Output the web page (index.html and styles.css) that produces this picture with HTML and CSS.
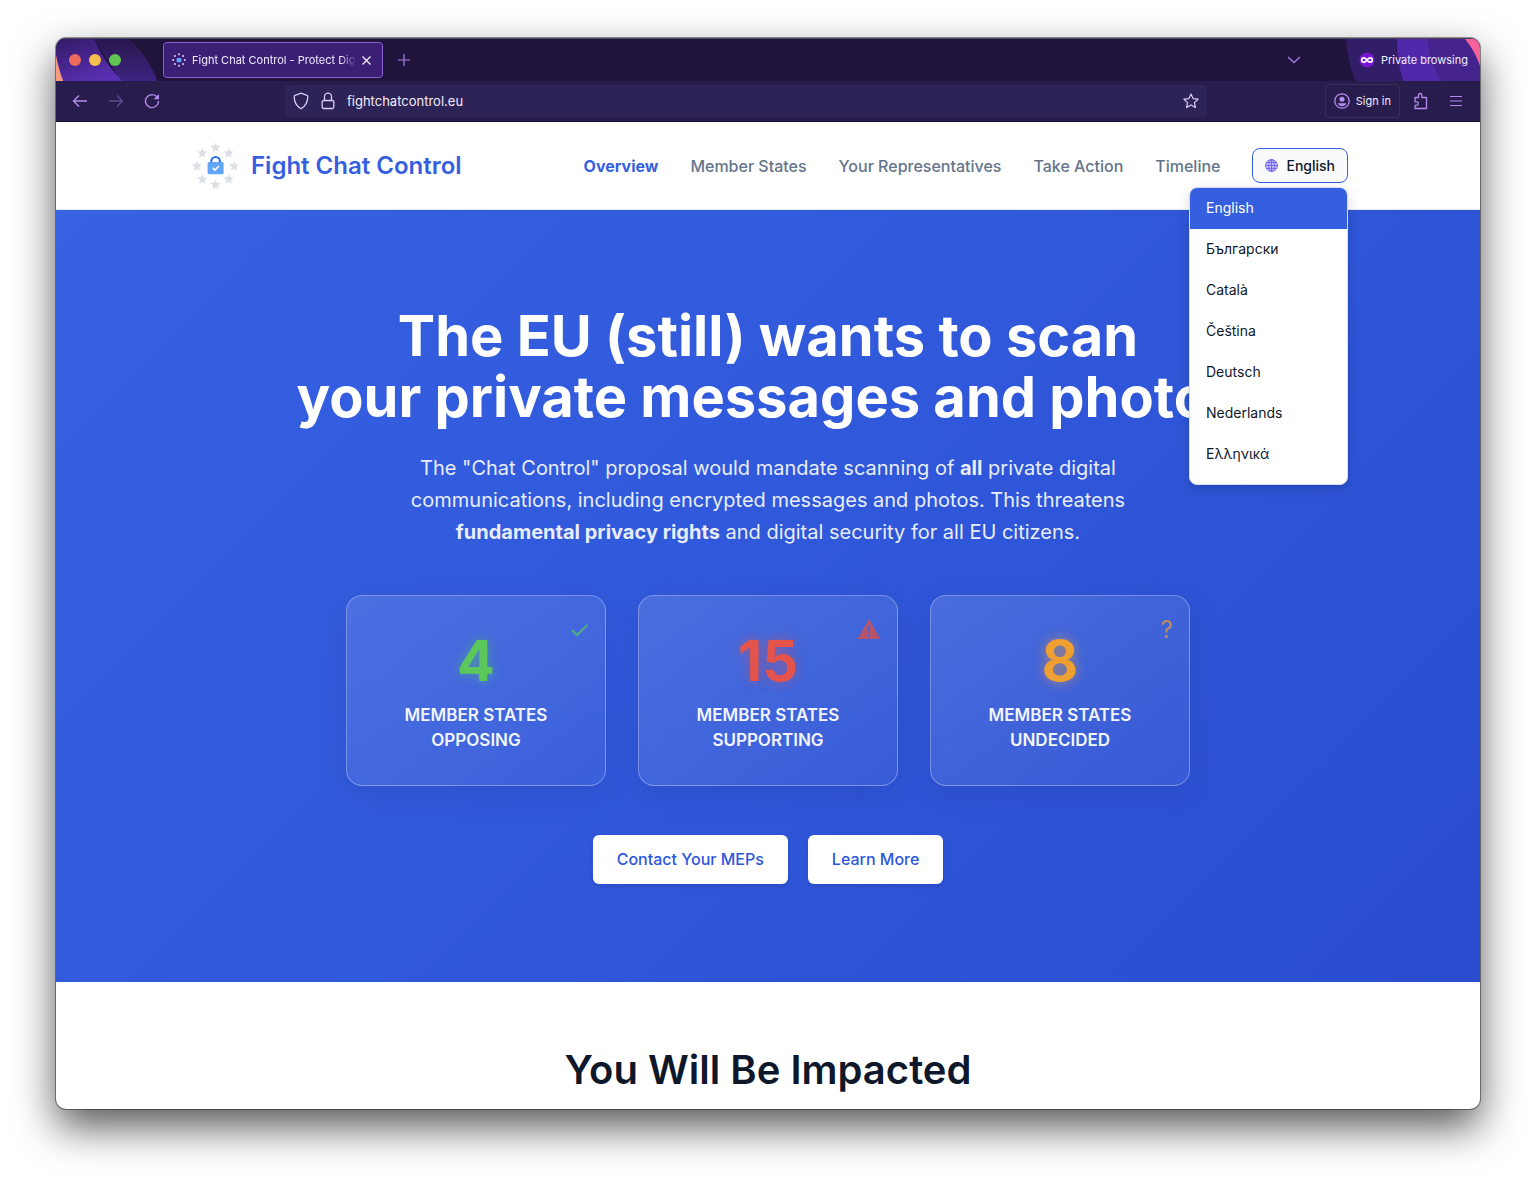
FILE: index.html
```html
<!DOCTYPE html>
<html lang="en">
<head>
    <meta charset="UTF-8">
    <meta name="viewport" content="width=device-width, initial-scale=1">
    <title>Fight Chat Control - Protect Digital Privacy in the EU</title>
    <link rel="stylesheet" href="styles.css">
</head>
<body>

<div class="window">
    <div class="tabbar">
        <svg class="theme theme-left" width="104" height="42" viewBox="0 0 104 42" aria-hidden="true">
            <defs>
                <linearGradient id="lg1" x1="0" y1="0" x2="0.5" y2="1">
                    <stop offset="0" stop-color="#321a66"/>
                    <stop offset="1" stop-color="#5a2fb4"/>
                </linearGradient>
                <linearGradient id="lg2" x1="0" y1="0" x2="0" y2="1">
                    <stop offset="0" stop-color="#28174d"/>
                    <stop offset="1" stop-color="#3f2484"/>
                </linearGradient>
            </defs>
            <path d="M38 0H72Q92 16 102 44H66Z" fill="url(#lg2)"/>
            <path d="M0 0H38Q48 24 68 44H0Z" fill="url(#lg1)"/>
            <path d="M0 16Q3 32 8 44H0Z" fill="#f79a80"/>
        </svg>
        <svg class="theme theme-right" width="134" height="42" viewBox="0 0 134 42" aria-hidden="true">
            <path d="M0 0H134V44H10Q2 24 0 0Z" fill="#321d68"/>
            <path d="M51 0H82Q84 24 97 44H58Q51 24 51 0Z" fill="#5029aa"/>
            <path d="M82 0H134V44H97Q84 24 82 0Z" fill="#44238c"/>
            <path d="M119 0H134V27Q129 12 119 0Z" fill="#f6619a"/>
        </svg>
        <div class="lights">
            <span class="light red"></span>
            <span class="light yellow"></span>
            <span class="light green"></span>
        </div>
        <div class="tab">
            <svg width="14" height="14" viewBox="0 0 14 14" aria-hidden="true">
                <g fill="#d9d2f5">
                    <circle cx="7" cy="1.2" r="1"/><circle cx="11.1" cy="2.9" r="1"/>
                    <circle cx="12.8" cy="7" r="1"/><circle cx="11.1" cy="11.1" r="1"/>
                    <circle cx="7" cy="12.8" r="1"/><circle cx="2.9" cy="11.1" r="1"/>
                    <circle cx="1.2" cy="7" r="1"/><circle cx="2.9" cy="2.9" r="1"/>
                </g>
                <rect x="4.6" y="5" width="4.8" height="4.2" rx="1" fill="#5fa5fa"/>
            </svg>
            <span class="tab-title">Fight Chat Control - Protect Digital</span>
            <button class="icon-btn tab-close" aria-label="Close tab">
                <svg width="9" height="9" viewBox="0 0 9 9"><path d="M0.5 0.5l8 8M8.500 0.5l-8 8" stroke="#f1ecff" stroke-width="1.3"/></svg>
            </button>
        </div>
        <button class="icon-btn new-tab" aria-label="New tab">
            <svg width="12" height="12" viewBox="0 0 12 12"><path d="M6 0v12M0 6h12" stroke="#a77fe6" stroke-width="1.2"/></svg>
        </button>
        <button class="icon-btn all-tabs" aria-label="List all tabs">
            <svg width="14" height="8" viewBox="0 0 14 8"><path d="M1 1l6 5.600L13 1" fill="none" stroke="#a77fe6" stroke-width="1.3"/></svg>
        </button>
        <div class="private">
            <svg width="16" height="16" viewBox="0 0 16 16" aria-hidden="true">
                <circle cx="8" cy="8" r="7.600" fill="#7a16d2"/>
                <path d="M8 8C6.800 6.300 6 5.800 4.900 5.800a2.200 2.200 0 0 0 0 4.400C6 10.200 6.800 9.700 8 8s2-2.200 3.100-2.200a2.200 2.200 0 0 1 0 4.400C10 10.200 9.200 9.700 8 8z" fill="none" stroke="#fff" stroke-width="1.700"/>
            </svg>
            <span>Private browsing</span>
        </div>
    </div>

    <div class="toolbar">
        <div class="history">
            <button class="icon-btn" aria-label="Back">
                <svg width="16" height="14" viewBox="0 0 16 14"><path d="M15 7H1.500M7 1.500L1.500 7 7 12.500" fill="none" stroke="#b48cf0" stroke-width="1.400"/></svg>
            </button>
            <button class="icon-btn" aria-label="Forward" disabled>
                <svg width="16" height="14" viewBox="0 0 16 14"><path d="M1 7h13.500M9 1.500L14.500 7 9 12.500" fill="none" stroke="#604a92" stroke-width="1.400"/></svg>
            </button>
            <button class="icon-btn" aria-label="Reload">
                <svg width="16" height="16" viewBox="0 0 16 16"><path d="M13.200 4.200A6.500 6.500 0 1 0 14.500 8" fill="none" stroke="#b48cf0" stroke-width="1.400"/><path d="M15 1v5.300H9.700z" fill="#b48cf0"/></svg>
            </button>
        </div>
        <div class="urlbar">
            <svg width="16" height="18" viewBox="0 0 16 18" aria-hidden="true"><path d="M8 1.200l6 2.100c.6.200.8.600.8 1.200 0 5-1.300 9.200-6.800 12.200C2.500 13.700 1.200 9.500 1.200 4.500c0-.6.200-1 .8-1.200z" fill="none" stroke="#d8cdf4" stroke-width="1.300"/></svg>
            <svg width="14" height="18" viewBox="0 0 14 18" aria-hidden="true"><rect x="1.200" y="8.500" width="11.600" height="8" rx="1.500" fill="none" stroke="#d8cdf4" stroke-width="1.300"/><path d="M3.500 8.500V4.600a3.500 3.500 0 0 1 7 0v3.900" fill="none" stroke="#d8cdf4" stroke-width="1.300"/></svg>
            <input class="url" type="text" value="fightchatcontrol.eu" aria-label="Address">
            <button class="icon-btn" aria-label="Bookmark this page">
                <svg width="16" height="16" viewBox="0 0 16 16"><path d="M8 1l2.100 4.600 5 .6-3.700 3.400 1 5L8 12.100 3.600 14.600l1-5L.9 6.200l5-.6z" fill="none" stroke="#d8cdf4" stroke-width="1.200" stroke-linejoin="round"/></svg>
            </button>
        </div>
        <div class="tools">
            <button class="sign-in">
                <svg width="16" height="16" viewBox="0 0 16 16" aria-hidden="true"><circle cx="8" cy="8" r="7.200" fill="none" stroke="#b48cf0" stroke-width="1.300"/><circle cx="8" cy="6.300" r="2.500" fill="#b48cf0"/><path d="M3.500 10.200h9C11.500 12.300 10 13.200 8 13.200s-3.500-.9-4.500-3z" fill="#b48cf0"/></svg>
                Sign in
            </button>
            <button class="icon-btn" aria-label="Extensions">
                <svg width="16" height="18" viewBox="0 0 16 18"><path d="M2 5.500h3.500V3.200a1.700 1.700 0 0 1 3.400 0v2.300H13.500V16.500H2v-3.200h1.600a1.700 1.700 0 0 0 0-3.400H2z" fill="none" stroke="#b48cf0" stroke-width="1.300" stroke-linejoin="round"/></svg>
            </button>
            <button class="icon-btn menu-btn" aria-label="Menu">
                <svg width="12" height="12" viewBox="0 0 12 12"><path d="M0 1.500h12M0 6h12M0 10.500h12" stroke="#b48cf0" stroke-width="1.200"/></svg>
            </button>
        </div>
    </div>

    <header class="header">
        <div class="header-inner">
            <a class="logo" href="#">
                <svg width="55" height="54" viewBox="0 0 55 54" aria-hidden="true">
                    <defs>
                        <path id="star" d="M0-5l1.500 3.200 3.500.4-2.600 2.400.7 3.500L0 2.800l-3.100 1.700.7-3.500L-5-1.400l3.500-.4z"/>
                    </defs>
                    <g fill="#dcdfe5">
                        <use href="#star" x="27.500" y="8.500"/><use href="#star" x="40.700" y="14"/>
                        <use href="#star" x="46.200" y="27"/><use href="#star" x="40.700" y="40"/>
                        <use href="#star" x="27.500" y="45.500"/><use href="#star" x="14.300" y="40"/>
                        <use href="#star" x="8.800" y="27"/><use href="#star" x="14.300" y="14"/>
                    </g>
                    <path d="M23.300 24v-1.700a4.300 4.300 0 0 1 8.600 0V24" fill="none" stroke="#2f72e4" stroke-width="2.200"/>
                    <rect x="19.600" y="23" width="16" height="12.300" rx="1.500" fill="#60a5fa"/>
                    <path d="M24.600 28.800l2.300 2.300 4-4" fill="none" stroke="#fff" stroke-width="1.500"/>
                </svg>
                Fight Chat Control
            </a>
            <nav class="nav">
                <a class="active" href="#overview">Overview</a>
                <a href="#states">Member States</a>
                <a href="#representatives">Your Representatives</a>
                <a href="#action">Take Action</a>
                <a href="#timeline">Timeline</a>
                <div class="lang">
                    <button class="lang-btn" aria-haspopup="true" aria-expanded="true">
                        <svg width="13" height="13" viewBox="0 0 12 12" aria-hidden="true"><circle cx="6" cy="6" r="5.500" fill="#c9c3fb"/><g fill="none" stroke="#6b5cf0" stroke-width="0.800"><circle cx="6" cy="6" r="5.500"/><ellipse cx="6" cy="6" rx="2.600" ry="5.500"/><path d="M6 .5v11M.5 6h11M1.300 3.300h9.400M1.300 8.700h9.400"/></g></svg>
                        English
                    </button>
                    <ul class="lang-menu">
                        <li><a class="selected" href="#en">English</a></li>
                        <li><a href="#bg" lang="bg">Български</a></li>
                        <li><a href="#ca" lang="ca">Català</a></li>
                        <li><a href="#cs" lang="cs">Čeština</a></li>
                        <li><a href="#de" lang="de">Deutsch</a></li>
                        <li><a href="#nl" lang="nl">Nederlands</a></li>
                        <li><a href="#el" lang="el">Ελληνικά</a></li>
                    </ul>
                </div>
            </nav>
        </div>
    </header>

    <main>
        <section class="hero" id="overview">
            <h1>The EU (still) wants to scan<br>your private messages and photos</h1>
            <p class="lead">The "Chat Control" proposal would mandate scanning of <strong>all</strong> private digital communications, including encrypted messages and photos. This threatens <strong>fundamental privacy rights</strong> and digital security for all EU citizens.</p>
            <div class="stats">
                <div class="stat opposing">
                    <svg class="stat-icon" width="18" height="24" viewBox="0 0 18 24" aria-hidden="true"><path d="M1 12l5 5L16.500 7" fill="none" stroke="#5cc85c" stroke-width="2.200"/></svg>
                    <div class="number">4</div>
                    <div class="label">Member States Opposing</div>
                </div>
                <div class="stat supporting">
                    <svg class="stat-icon" width="24" height="24" viewBox="0 0 24 24" aria-hidden="true"><path d="M12 1L23.500 21H.5z" fill="#e74c3c"/><path d="M10.800 7.500h2.400l-.5 7h-1.400zM10.900 16h2.200v2.500h-2.200z" fill="#4466dc"/></svg>
                    <div class="number">15</div>
                    <div class="label">Member States Supporting</div>
                </div>
                <div class="stat undecided">
                    <span class="stat-icon">?</span>
                    <div class="number">8</div>
                    <div class="label">Member States Undecided</div>
                </div>
            </div>
            <div class="actions">
                <a class="btn" href="#action">Contact Your MEPs</a>
                <a class="btn" href="#impact">Learn More</a>
            </div>
        </section>
        <section class="impact" id="impact">
            <h2>You Will Be Impacted</h2>
        </section>
    </main>
</div>

</body>
</html>
```

FILE: styles.css
```css
* {
    box-sizing: border-box;
}
body {
    margin: 0;
    padding: 38px 56px 74px;
    height: 100vh;
    background: #fff;
    color: #0f172a;
    font-family: Inter, "Noto Sans", sans-serif;
    font-size: 16px;
}
a {
    color: inherit;
    text-decoration: none;
}
button {
    font: inherit;
    color: inherit;
    cursor: pointer;
}
svg {
    display: block;
    flex: none;
}

.window {
    height: 100%;
    overflow: hidden;
    border-radius: 10px;
    background: #fff;
    box-shadow: 0 0 0 1px rgba(0, 0, 0, 0.4), 0 18px 42px rgba(0, 0, 0, 0.66);
}

/* browser chrome */
.tabbar {
    position: relative;
    display: flex;
    align-items: center;
    height: 43px;
    padding: 0 12px 0 13px;
    background: #20143c;
    border-top: 1px solid #4c4460;
    color: #f1ecff;
    font-size: 11px;
}
.tabbar > * {
    position: relative;
}
.tabbar .theme {
    position: absolute;
    top: 0;
}
.theme-left {
    left: 0;
}
.theme-right {
    right: 0;
}
.icon-btn {
    display: flex;
    align-items: center;
    justify-content: center;
    padding: 0;
    border: 0;
    background: none;
}
.lights {
    display: flex;
    gap: 8px;
}
.light {
    width: 12px;
    height: 12px;
    border-radius: 50%;
}
.red {
    background: #ec6a5e;
}
.yellow {
    background: #f4bf4f;
}
.green {
    background: #61c554;
}
.tab {
    display: flex;
    align-items: center;
    gap: 6px;
    width: 220px;
    height: 36px;
    margin-left: 42px;
    padding: 0 11px 0 8px;
    border: 1px solid #8a5fd0;
    border-radius: 4px;
    background: #3a1f74;
}
.tab-title {
    flex: 1;
    overflow: hidden;
    white-space: nowrap;
    mask-image: linear-gradient(to left, transparent, #000 16px);
}
.new-tab {
    margin-left: 15px;
}
.all-tabs {
    margin-left: auto;
}
.private {
    display: flex;
    align-items: center;
    gap: 6px;
    margin-left: 58px;
}

.toolbar {
    display: flex;
    align-items: center;
    height: 41px;
    padding: 0 10px 0 16px;
    background: #281c4c;
    border-bottom: 1px solid #170d33;
    color: #f1ecff;
}
.history {
    display: flex;
    align-items: center;
    gap: 20px;
    margin-right: 125px;
}
.urlbar {
    display: flex;
    align-items: center;
    gap: 12px;
    flex: 1;
    height: 32px;
    padding: 0 8px;
    border-radius: 4px;
    background: #2d2356;
}
.url {
    flex: 1;
    min-width: 0;
    padding: 0;
    border: 0;
    outline: 0;
    background: none;
    color: #f1ecff;
    font: 13px Inter, sans-serif;
}
.tools {
    display: flex;
    align-items: center;
    gap: 13px;
    margin-left: 118px;
}
.sign-in {
    display: flex;
    align-items: center;
    gap: 6px;
    height: 34px;
    padding: 0 8px;
    border: 1px solid #3a2f62;
    border-radius: 4px;
    background: none;
    font-size: 11px;
}
.menu-btn {
    width: 28px;
    height: 28px;
}

/* page header */
.header {
    position: relative;
    z-index: 2;
    height: 88px;
    background: #fff;
    border-bottom: 1px solid #e2e8f0;
}
.header-inner {
    display: flex;
    align-items: center;
    justify-content: space-between;
    max-width: 1160px;
    height: 100%;
    margin: 0 auto;
}
.logo {
    display: flex;
    align-items: center;
    gap: 8px;
    color: #365fe0;
    font-size: 24px;
    font-weight: 600;
}
.nav {
    display: flex;
    align-items: center;
    gap: 32px;
    color: #64748b;
    font-weight: 500;
}
.nav .active {
    color: #365fe0;
    font-weight: 700;
}
.lang {
    position: relative;
    color: #0f172a;
    font-size: 14px;
}
.lang-btn {
    display: flex;
    align-items: center;
    gap: 8px;
    height: 35px;
    padding: 0 12px;
    border: 1px solid #365fe0;
    border-radius: 8px;
    background: #f8fafc;
}
.lang-menu {
    position: absolute;
    top: 39px;
    right: 0;
    width: 159px;
    height: 298px;
    margin: 0;
    padding: 0;
    overflow: hidden;
    border: 1px solid #d5ddf5;
    border-radius: 8px;
    background: #fff;
    box-shadow: 0 4px 12px rgba(0, 0, 0, 0.15);
    list-style: none;
    font-weight: 400;
}
.lang-menu a {
    display: block;
    height: 41px;
    padding: 0 16px;
    line-height: 40px;
}
.lang-menu .selected {
    background: #365fe0;
    color: #fff;
}

/* hero */
.hero {
    padding: 96px 24px 98px;
    background: linear-gradient(135deg, #3662e3, #2a4dd0);
    color: #fff;
    text-align: center;
}
h1 {
    margin: 0 0 24px;
    font-size: 56px;
    font-weight: 700;
    line-height: 61px;
}
.lead {
    max-width: 720px;
    margin: 0 auto 47px;
    color: #e8edfb;
    font-size: 20px;
    line-height: 32px;
}
.stats {
    display: grid;
    grid-template-columns: repeat(3, 1fr);
    gap: 32px;
    max-width: 844px;
    margin: 0 auto 49px;
}
.stat {
    position: relative;
    padding: 32px;
    border: 1px solid rgba(255, 255, 255, 0.3);
    border-radius: 16px;
    background: linear-gradient(145deg, rgba(255, 255, 255, 0.13), rgba(255, 255, 255, 0.05));
    box-shadow: 0 8px 32px rgba(0, 0, 0, 0.08);
}
.stat-icon {
    position: absolute;
    top: 22px;
    right: 16px;
    font-size: 24px;
    line-height: 24px;
    opacity: 0.7;
}
.number {
    margin-bottom: 9px;
    font-size: 56px;
    font-weight: 700;
    line-height: 66px;
}
.label {
    color: #f2f5fd;
    font-size: 17px;
    font-weight: 600;
    line-height: 25px;
    text-transform: uppercase;
}
.opposing .number {
    color: #5cc85c;
    text-shadow: 0 0 12px rgba(92, 200, 92, 0.5);
}
.supporting .number {
    color: #e5544a;
    text-shadow: 0 0 12px rgba(229, 84, 74, 0.5);
}
.undecided .number,
.undecided .stat-icon {
    color: #f0a030;
}
.undecided .number {
    text-shadow: 0 0 12px rgba(240, 160, 48, 0.6);
}
.actions {
    display: flex;
    justify-content: center;
    gap: 20px;
}
.btn {
    padding: 0 24px;
    border-radius: 6px;
    background: #fff;
    box-shadow: 0 2px 4px rgba(0, 0, 0, 0.1);
    color: #2c57dc;
    font-weight: 500;
    line-height: 49px;
}

.impact {
    padding: 64px 24px;
    text-align: center;
}
h2 {
    margin: 0;
    font-size: 40px;
    font-weight: 600;
    line-height: 48px;
}
```
